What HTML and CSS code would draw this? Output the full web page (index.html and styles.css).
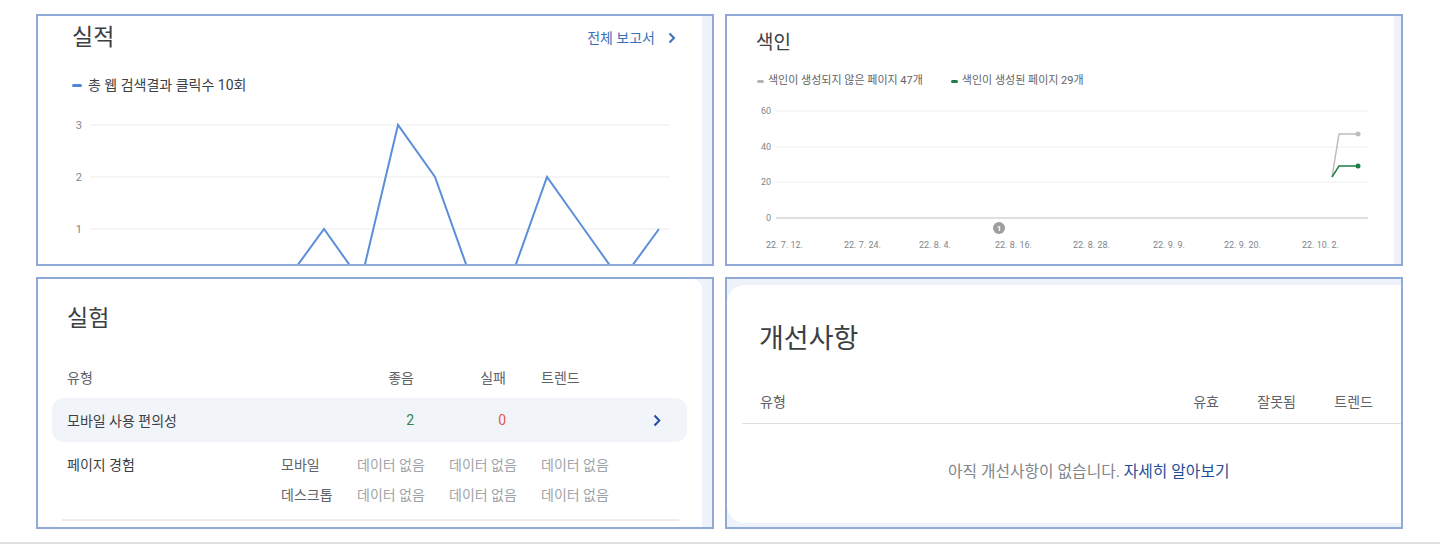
FILE: index.html
```html
<!DOCTYPE html>
<html lang="ko">
<head>
<meta charset="utf-8">
<title>Search Console 개요</title>
<link rel="stylesheet" href="styles.css">
</head>
<body>
<div class="page">
  <div class="grid">
    <section class="frame">
      <div class="card card-perf">
        <div class="card-head head-perf">
          <h2 class="title">실적</h2>
          <a class="report-link">전체 보고서
            <svg class="chev" width="8" height="12" viewBox="0 0 8 12"><path d="M1.5 1.5 L6 6 L1.5 10.5" fill="none" stroke="#3b70b9" stroke-width="2"/></svg>
          </a>
        </div>
        <div class="legend legend-perf"><span class="dash dash-blue"></span>총 웹 검색결과 클릭수 10회</div>
        <svg class="chart chart-perf" width="664" height="172" viewBox="38 94 664 172">
          <g stroke="#ececec" stroke-width="1">
            <line x1="90" y1="125" x2="670" y2="125"/>
            <line x1="90" y1="177" x2="670" y2="177"/>
            <line x1="90" y1="229" x2="670" y2="229"/>
          </g>
          <g class="axis-perf" text-anchor="end">
            <text x="82" y="129">3</text>
            <text x="82" y="181">2</text>
            <text x="82" y="233">1</text>
          </g>
          <polyline points="90,281 286,281 324,229 361,281 398,125 435,177 472,281 510,281 547,177 584,229 621,281 659,229" fill="none" stroke="#5b8fd8" stroke-width="2" stroke-linejoin="miter"/>
        </svg>
      </div>
    </section>

    <section class="frame">
      <div class="card card-index">
        <div class="card-head head-index">
          <h2 class="title title-sm">색인</h2>
        </div>
        <div class="legend legend-index">
          <span class="legend-item"><span class="dash dash-sm dash-gray"></span>색인이 생성되지 않은 페이지 47개</span>
          <span class="legend-item"><span class="dash dash-sm dash-green"></span>색인이 생성된 페이지 29개</span>
        </div>
        <svg class="chart chart-index" width="667" height="176" viewBox="727 88 667 176">
          <g stroke="#efefef" stroke-width="1">
            <line x1="776" y1="111" x2="1368" y2="111"/>
            <line x1="776" y1="147" x2="1368" y2="147"/>
            <line x1="776" y1="182" x2="1368" y2="182"/>
          </g>
          <line x1="776" y1="218" x2="1368" y2="218" stroke="#d4d4d4" stroke-width="1.5"/>
          <g class="axis-index" text-anchor="end">
            <text x="771" y="114">60</text>
            <text x="771" y="150">40</text>
            <text x="771" y="185">20</text>
            <text x="771" y="221">0</text>
          </g>
          <g class="axis-index">
            <text x="766" y="248">22. 7. 12.</text>
            <text x="844" y="248">22. 7. 24.</text>
            <text x="919" y="248">22. 8. 4.</text>
            <text x="995" y="248">22. 8. 16.</text>
            <text x="1073" y="248">22. 8. 28.</text>
            <text x="1153" y="248">22. 9. 9.</text>
            <text x="1224" y="248">22. 9. 20.</text>
            <text x="1302" y="248">22. 10. 2.</text>
          </g>
          <circle cx="999" cy="228" r="6" fill="#9e9e9e"/>
          <text class="annot" x="999" y="231" text-anchor="middle">1</text>
          <polyline points="1332,177 1339,134 1358,134" fill="none" stroke="#bdbdbd" stroke-width="1.5"/>
          <circle cx="1358" cy="134" r="2.5" fill="#bdbdbd"/>
          <polyline points="1332,177 1339,166 1358,166" fill="none" stroke="#1e7e45" stroke-width="1.5"/>
          <circle cx="1358" cy="166" r="2.5" fill="#1e7e45"/>
        </svg>
      </div>
    </section>

    <section class="frame">
      <div class="card card-exp">
        <h2 class="title head-exp">실험</h2>
        <div class="exp-table">
          <div class="exp-row exp-header">
            <span class="c-name c-span">유형</span>
            <span class="c-num">좋음</span>
            <span class="c-num">실패</span>
            <span class="c-trend">트렌드</span>
          </div>
          <div class="exp-row exp-hl">
            <span class="c-name c-span">모바일 사용 편의성</span>
            <span class="c-num good">2</span>
            <span class="c-num bad">0</span>
            <span class="c-trend"></span>
            <span class="c-go">
              <svg width="8" height="13" viewBox="0 0 8 13"><path d="M1.5 1.5 L6.3 6.5 L1.5 11.5" fill="none" stroke="#1f4fa0" stroke-width="2"/></svg>
            </span>
          </div>
          <div class="exp-row exp-sub exp-sub-first">
            <span class="c-name c-strong">페이지 경험</span>
            <span class="c-dev">모바일</span>
            <span class="c-nodata">데이터 없음</span>
            <span class="c-nodata">데이터 없음</span>
            <span class="c-nodata">데이터 없음</span>
          </div>
          <div class="exp-row exp-sub">
            <span class="c-name"></span>
            <span class="c-dev">데스크톱</span>
            <span class="c-nodata">데이터 없음</span>
            <span class="c-nodata">데이터 없음</span>
            <span class="c-nodata">데이터 없음</span>
          </div>
        </div>
        <div class="exp-divider"></div>
      </div>
    </section>

    <section class="frame">
      <div class="card card-enh">
        <h2 class="title title-lg head-enh">개선사항</h2>
        <div class="enh-header">
          <span class="enh-type">유형</span>
          <span class="enh-col">유효</span>
          <span class="enh-col">잘못됨</span>
          <span class="enh-col">트렌드</span>
        </div>
        <p class="enh-empty">아직 개선사항이 없습니다. <a class="enh-link">자세히 알아보기</a></p>
      </div>
    </section>
  </div>
  <div class="rule"></div>
</div>
</body>
</html>
```

FILE: styles.css
```css
* { box-sizing: border-box; }

html, body {
  margin: 0;
  padding: 0;
  background: #ffffff;
  font-family: Roboto, "Noto Sans CJK KR", "Noto Sans", sans-serif;
  color: #3c4043;
  overflow: hidden;
}

.page {
  width: 1440px;
  height: 544px;
  padding-top: 14px;
}

.grid {
  display: grid;
  grid-template-columns: 678px 678px;
  grid-template-rows: 252px 252px;
  gap: 11px;
  padding-left: 36px;
}

.frame {
  border: 2px solid #8faad6;
  background: #eef3fb;
  overflow: hidden;
  display: flex;
  align-items: stretch;
}

.card {
  background: #ffffff;
  flex: none;
}

.title {
  margin: 0;
  font-weight: 400;
  font-size: 23px;
  line-height: 30px;
  color: #3c4043;
}

.title-sm {
  font-size: 19px;
  line-height: 26px;
}

.title-lg {
  font-size: 27px;
  line-height: 34px;
}

.card-head {
  display: flex;
  justify-content: space-between;
  align-items: center;
}

a { text-decoration: none; cursor: pointer; }

.legend {
  display: flex;
  align-items: center;
}

.dash {
  display: inline-block;
  width: 10px;
  height: 3px;
  border-radius: 2px;
  margin-right: 6px;
}
.dash-blue { background: #4f87d8; }
.dash-sm { width: 7px; margin-right: 4px; }
.dash-gray { background: #b3b3b3; }
.dash-green { background: #1e7e45; }

.chart { display: block; }

/* ---------- 실적 ---------- */
.card-perf { width: 664px; }

.head-perf {
  height: 30px;
  margin-top: 7px;
  padding: 0 26px 0 34px;
}

.report-link {
  display: flex;
  align-items: center;
  gap: 13px;
  font-size: 14px;
  line-height: 18px;
  color: #3b70b9;
}

.legend-perf {
  margin: 23px 0 0 34px;
  font-size: 14px;
  line-height: 18px;
  color: #3c4043;
}

.axis-perf text {
  font-family: Roboto, sans-serif;
  font-size: 11px;
  fill: #80868b;
}

/* ---------- 색인 ---------- */
.card-index { width: 667px; }

.head-index {
  height: 26px;
  margin-top: 14px;
  padding-left: 29px;
}

.legend-index {
  margin: 18px 0 0 30px;
  font-size: 11px;
  line-height: 14px;
  color: #5f6368;
}

.legend-item {
  display: inline-flex;
  align-items: center;
  margin-right: 28px;
}

.axis-index text {
  font-family: Roboto, sans-serif;
  font-size: 9px;
  fill: #80868b;
}

.annot {
  font-family: Roboto, sans-serif;
  font-size: 8px;
  font-weight: 700;
  fill: #ffffff;
}

/* ---------- 실험 ---------- */
.card-exp {
  width: 664px;
  border-radius: 0 10px 0 0;
}

.head-exp {
  margin-top: 25px;
  padding-left: 29px;
}

.exp-table {
  margin: 33px 15px 0 14px;
}

.exp-row {
  display: grid;
  grid-template-columns: 214px 76px 92px 92px 92px 1fr;
  align-items: center;
  padding: 0 15px;
  font-size: 14px;
}

.exp-header {
  height: 20px;
  color: #5f6368;
}

.exp-hl {
  margin-top: 11px;
  height: 44px;
  background: #f1f5fa;
  border-radius: 12px;
  color: #3c4043;
}

.c-span { grid-column: 1 / span 2; }

.c-num {
  text-align: right;
  padding-right: 35px;
}

.good { color: #2e8550; font-family: Roboto, sans-serif; }
.bad { color: #e2574c; font-family: Roboto, sans-serif; }

.c-go {
  display: flex;
  justify-content: flex-end;
  padding-right: 11px;
}

.exp-sub {
  height: 30px;
}
.exp-sub-first { margin-top: 7px; }

.c-strong { color: #3c4043; }
.c-dev { color: #5f6368; }
.c-nodata { color: #a0a4a8; }

.exp-divider {
  margin: 10px 23px 0 24px;
  height: 2px;
  background: #ececec;
}

/* ---------- 개선사항 ---------- */
.card-enh {
  flex: 1;
  margin: 6px 0 4px 0;
  border-radius: 18px 0 0 18px;
}

.head-enh {
  margin-top: 37px;
  padding-left: 32px;
}

.enh-header {
  display: flex;
  align-items: center;
  margin: 36px 0 0 15px;
  padding: 0 28px 11px 18px;
  border-bottom: 1px solid #e0e0e0;
  font-size: 14px;
  line-height: 20px;
  color: #5f6368;
}

.enh-type { flex: 1; }

.enh-col {
  width: 77px;
  text-align: right;
}

.enh-empty {
  margin: 38px 0 0 0;
  padding-left: 221px;
  font-size: 15.8px;
  line-height: 20px;
  color: #80868b;
}

.enh-link { color: #1f4e99; }

/* ---------- bottom rule ---------- */
.rule {
  margin-top: 13px;
  height: 2px;
  background: #e0e0e0;
}
```
